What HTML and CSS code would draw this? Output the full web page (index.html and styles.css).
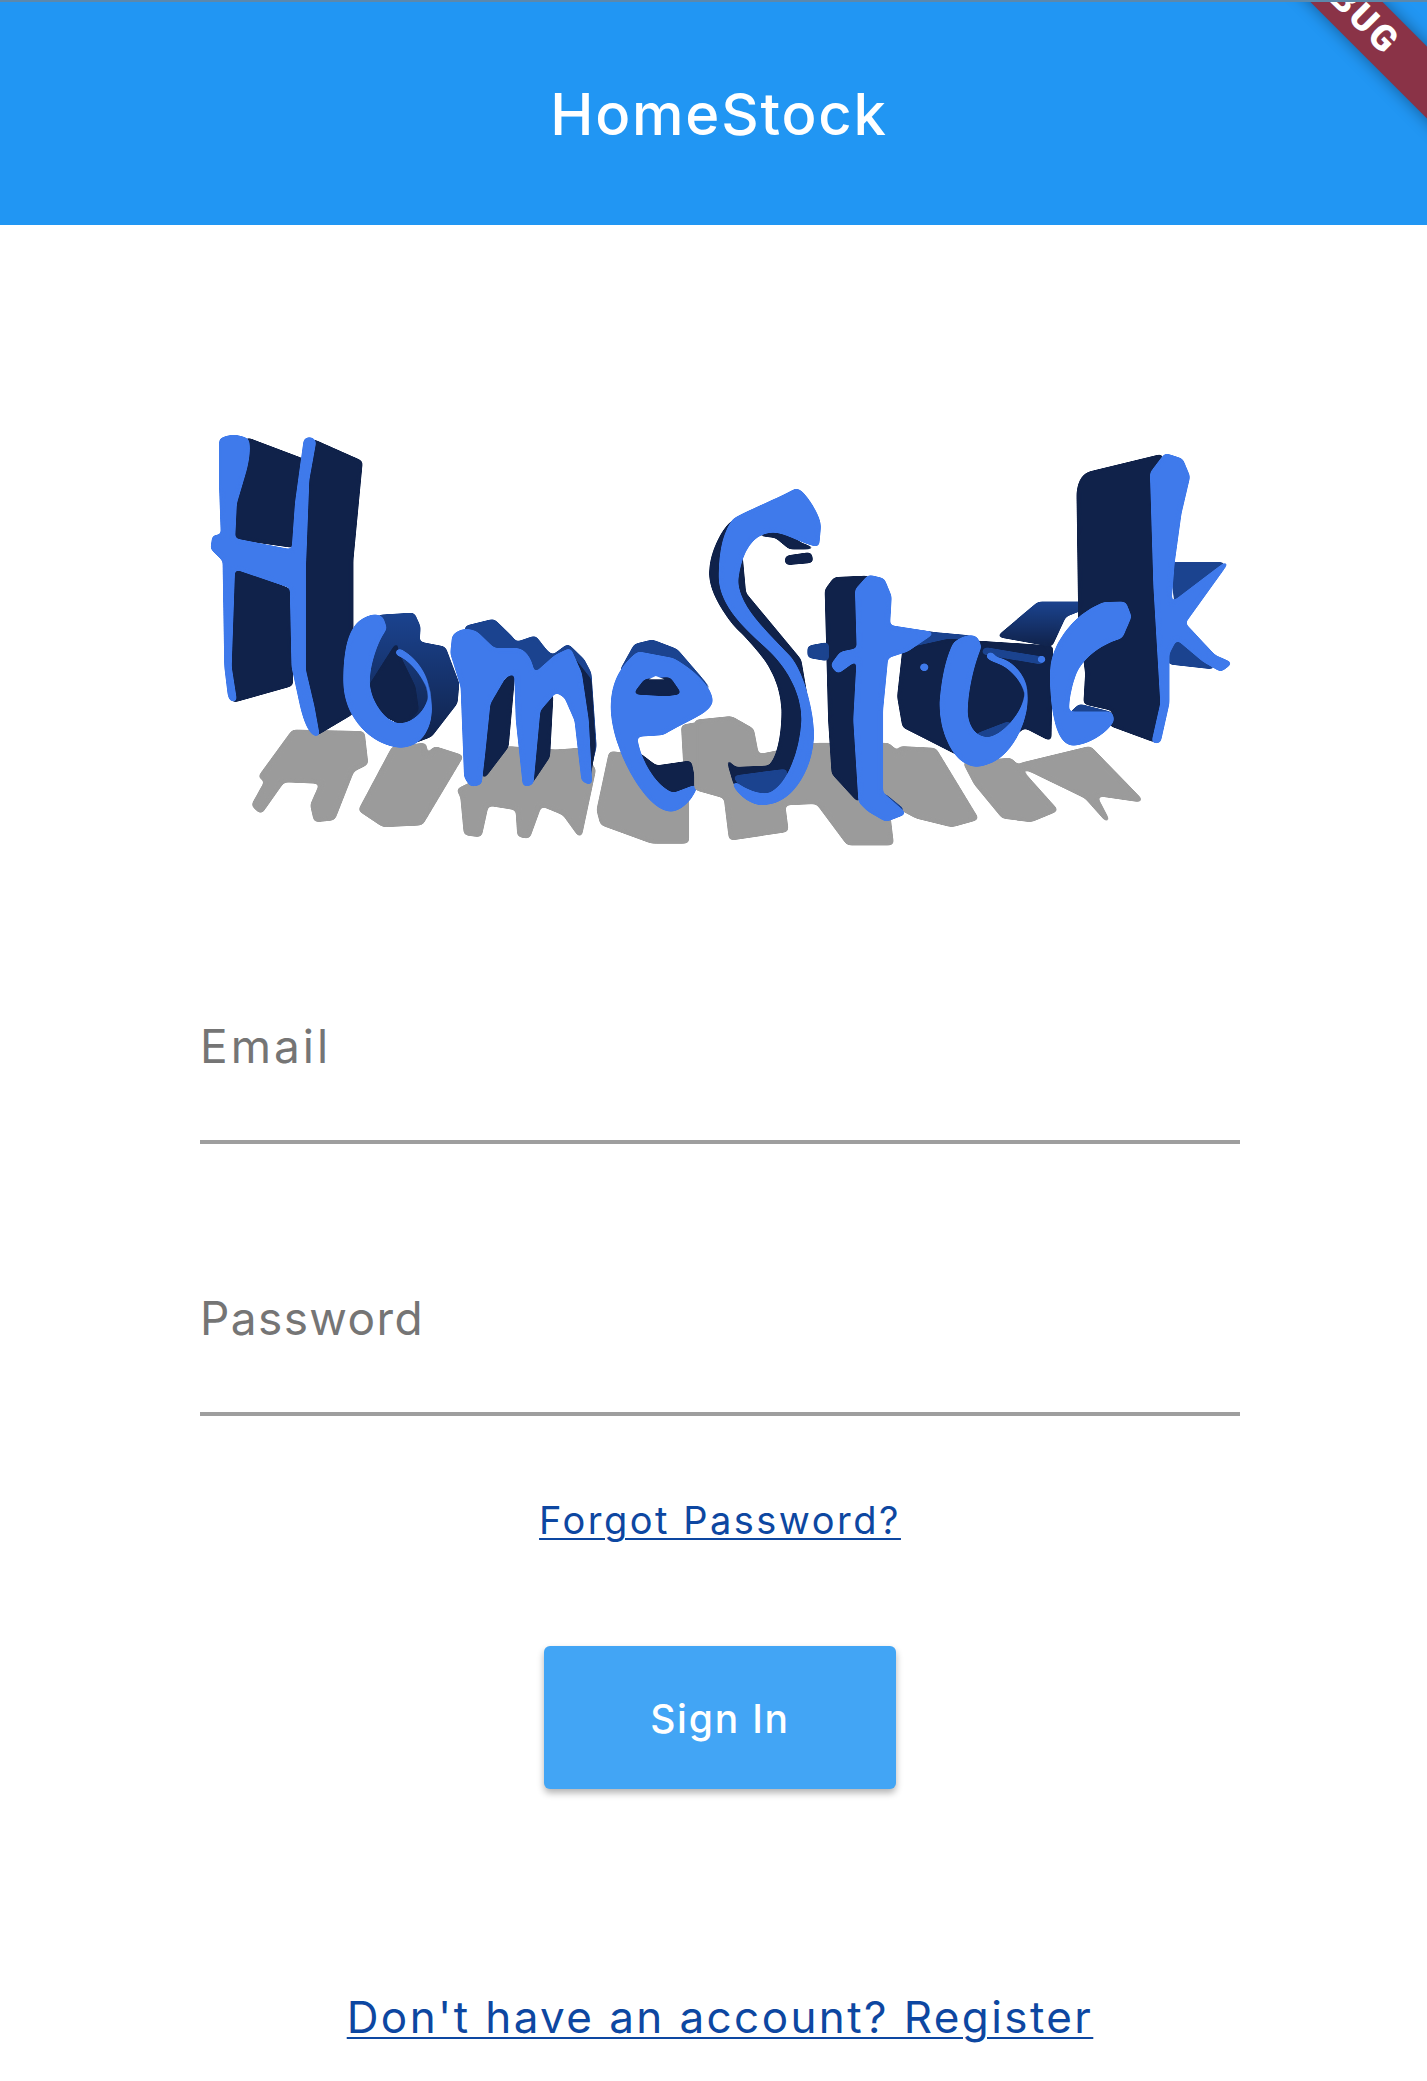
FILE: index.html
```html
<!DOCTYPE html>
<html lang="en">
<head>
<meta charset="utf-8">
<title>HomeStock</title>
<link rel="stylesheet" href="styles.css">
</head>
<body>
<header class="app-bar">
  <h1 class="app-title">HomeStock</h1>
  <div class="debug-banner">DEBUG</div>
</header>
<main class="login">
  <svg class="logo" viewBox="200 420 1040 440" role="img" aria-label="HomeStock logo">
    <defs>
      <linearGradient id="topShade" x1="0" y1="0" x2="0" y2="1">
        <stop offset="0" stop-color="#1b438f"/>
        <stop offset="1" stop-color="#10224a"/>
      </linearGradient>
      <filter id="smooth" x="-15%" y="-15%" width="130%" height="130%" color-interpolation-filters="sRGB">
        <feGaussianBlur stdDeviation="7"/>
        <feComponentTransfer>
          <feFuncA type="linear" slope="9" intercept="-3.6"/>
        </feComponentTransfer>
      </filter>
    </defs>
    <g transform="translate(190 420) scale(.345 .3333)">
      <g class="shadow">
        <path d="M300 935 L500 940 L510 1030 L470 1050 L415 1195 L365 1200 L355 1155 L385 1085 L270 1080 L205 1175 L185 1155 L225 1080 L205 1070 Z"/>
        <path d="M590 985 L680 975 L680 1025 L710 985 L785 1010 L670 1210 L560 1215 L495 1170 Z"/>
        <path d="M780 1110 L850 1075 L920 985 L1060 995 L1130 990 L1170 1050 L1130 1245 L1085 1180 L1015 1150 L980 1250 L955 1245 L950 1165 L860 1150 L840 1245 L800 1240 L790 1130 Z"/>
        <path d="M1220 1000 L1300 1010 L1440 1100 L1440 1265 L1340 1265 L1195 1210 L1185 1170 Z"/>
        <path d="M1430 920 L1568 895 L1568 1110 L1440 1100 Z"/>
      </g>
      <g class="dark">
        <path d="M165 55 L330 120 L300 380 L130 355 L135 200 Z"/>
        <path d="M130 440 L290 510 L295 795 L125 845 L110 740 Z"/>
        <path d="M355 60 L497 125 L470 420 L470 880 L365 945 L335 820 L325 500 Z"/>
      </g>
      <path class="mid" d="M125 360 L305 395 L300 450 L170 410 Z"/>
      <path class="shade" d="M545 585 L650 578 L668 620 L665 665 L740 680 L780 790 L775 850 L700 950 L650 970 L500 800 Z"/>
      <path class="dark" d="M600 670 L520 800 L550 880 L620 915 L660 870 L650 800 L600 695 Z"/>
      <path class="mid" d="M800 620 L880 600 L930 650 L945 670 L1000 650 L1030 690 L1050 710 L1095 675 L1140 720 L1160 760 L1175 980 L1150 1090 L1130 900 L1090 820 L1000 760 L900 720 L800 680 Z"/>
      <g class="dark">
        <path d="M940 750 L860 850 L850 1075 L920 980 Z"/>
        <path d="M1050 820 L1005 880 L985 1095 L1040 1010 Z"/>
        <path d="M1100 700 L1160 780 L1172 980 L1155 1090 L1125 880 Z"/>
      </g>
      <path class="mid" d="M1250 750 L1290 675 L1340 662 L1410 690 L1460 750 L1510 810 L1400 720 L1260 760 Z"/>
      <path class="dark" d="M1290 950 L1300 1000 L1350 1040 L1450 1025 L1465 1100 L1380 1130 L1320 1100 Z"/>
      <g class="face">
        <path d="M90 60 Q125 40 165 60 Q175 100 150 180 L130 250 L125 360 L300 395 L310 250 L335 60 Q350 50 360 65 L340 180 L330 450 L330 750 L355 860 L370 945 Q345 945 325 860 L300 740 L295 500 L125 440 L115 740 L130 840 Q120 845 115 825 L105 740 L100 420 L65 385 L70 350 L95 350 L90 200 Z"/>
        <path d="M490 610 C520 585 545 585 555 595 L565 625 C540 660 515 730 515 790 C520 850 560 905 600 915 C640 920 690 880 695 830 C690 780 650 720 600 700 L605 690 C660 720 695 780 695 850 C700 920 670 975 610 978 C540 975 450 900 450 780 C450 700 460 640 490 610 Z"/>
        <path d="M765 650 Q790 620 830 640 L880 690 L950 690 Q985 700 995 770 L1060 710 L1100 690 L1130 760 L1150 900 L1160 1090 L1140 1080 L1120 900 L1090 830 L1060 810 L1010 870 L990 1090 L970 1095 L950 900 L945 750 L910 770 L865 850 L850 1000 L840 1090 L815 1095 L800 1070 L790 800 L760 700 Z"/>
        <path d="M1225 860 C1225 790 1250 740 1300 700 L1400 720 C1450 750 1510 800 1510 845 C1500 880 1440 895 1370 940 L1290 945 C1295 1010 1340 1100 1400 1125 L1465 1100 C1450 1140 1420 1170 1390 1170 C1320 1160 1225 980 1225 860 Z"/>
      </g>
      <path class="dark" d="M1290 820 L1320 780 L1390 775 L1420 820 L1380 825 Z"/>
      <path class="hole" d="M1330 778 L1350 768 L1375 778 Z"/>
    </g>
    <g transform="translate(700 420) scale(.345 .3333)">
      <g class="shadow">
        <path d="M-10 905 L90 895 L150 930 L165 1010 L335 975 L545 975 L600 1030 L580 985 L680 990 L800 1195 L730 1215 L630 1190 L540 1140 L555 1270 L430 1270 L340 1145 L240 1150 L250 1230 L90 1255 L75 1130 L-10 1105 Z"/>
        <path d="M770 1030 L900 1020 L1030 1170 L960 1200 L880 1190 L800 1090 Z"/>
        <path d="M930 1035 L1130 985 L1275 1140 L1140 1120 L1180 1200 L1120 1130 Z"/>
      </g>
      <path class="dark" d="M110 295 C70 310 30 400 30 460 C30 530 100 620 125 640 C180 700 235 760 240 870 C240 950 225 1020 200 1040 L100 1045 L80 1020 L100 1090 L130 1130 L240 1130 L300 1000 L320 900 L290 720 L130 520 Z"/>
      <path class="mid" d="M100 1070 L250 1050 L240 1120 L140 1130 Z"/>
      <path class="dark" d="M170 345 L240 330 L290 370 L330 385 L260 385 L220 350 Z"/>
      <path class="dark" d="M250 410 L320 400 L325 425 L250 432 Z"/>
      <path class="face" d="M100 300 C150 270 230 240 280 210 C300 215 345 290 345 320 L340 375 C300 370 250 330 210 332 C150 335 115 390 105 480 C105 560 190 640 260 715 C300 770 325 880 325 950 C320 1040 270 1150 180 1150 C150 1150 110 1120 100 1090 C130 1115 170 1130 200 1125 C260 1100 295 990 300 900 C300 800 240 720 190 675 C130 620 60 550 60 470 C60 400 70 340 100 300 Z"/>
      <path class="dark" d="M365 510 L390 475 L490 470 L460 520 L460 1145 L385 1060 L375 900 Z"/>
      <g class="mid">
        <path d="M315 680 L370 670 L370 720 L315 710 Z"/>
        <path d="M530 1120 L590 1170 L540 1180 Z"/>
        <path d="M545 620 L680 640 L790 650 L720 680 L560 680 Z"/>
      </g>
      <path class="dark" d="M590 690 L720 660 L1020 680 L1015 960 L940 920 L870 980 L780 1020 L590 920 L575 830 Z"/>
      <path class="shade" d="M860 650 L980 545 L1170 545 L1060 590 L1020 680 Z"/>
      <path class="dark" d="M1095 220 Q1100 160 1140 155 L1340 105 L1310 180 L1320 500 L1340 900 L1320 965 L1190 915 L1200 870 L1115 850 L1120 760 L1100 600 Z"/>
      <path class="mid" d="M1365 430 L1520 430 L1380 560 Z"/>
      <path class="mid" d="M1360 670 L1400 660 L1490 745 L1360 730 Z"/>
      <path class="mid" d="M825 685 L1000 715 L990 730 L820 700 Z"/>
      <path class="mid" d="M800 945 L900 905 L880 945 L840 965 Z"/>
      <path class="mid" d="M1075 880 L1100 855 L1195 880 L1165 905 L1070 915 Z"/>
      <g class="face">
        <path d="M455 510 L490 470 L530 480 L550 530 L545 620 L670 640 L600 690 L540 710 L525 870 L525 1120 L590 1180 L540 1200 L490 1170 L465 1145 L450 900 L460 710 L400 755 L385 735 L410 700 L460 690 Z"/>
        <path d="M740 670 C760 655 785 645 800 655 L810 680 C790 730 770 810 770 880 C775 930 800 955 835 958 C880 950 945 880 945 820 C935 770 890 730 850 720 L855 715 C910 725 950 780 945 840 C940 920 890 1030 800 1035 C740 1030 700 940 700 850 C705 780 720 710 740 670 Z"/>
        <path d="M1310 160 L1350 105 L1395 120 L1415 170 L1390 280 L1370 430 L1360 560 L1525 430 L1400 610 L1490 710 L1535 730 L1510 750 L1460 720 L1380 650 L1355 700 L1355 850 L1330 965 L1315 965 L1340 850 L1320 500 Z"/>
        <path d="M1020 760 C1020 680 1080 590 1170 552 L1230 550 L1245 590 L1220 650 C1170 665 1110 700 1085 760 C1070 800 1062 850 1065 880 L1190 880 L1195 900 C1180 930 1130 970 1080 972 C1040 970 1020 880 1020 760 Z"/>
        <circle cx="650" cy="742" r="8"/>
        <circle cx="842" cy="708" r="7"/>
        <circle cx="990" cy="718" r="7"/>
      </g>
    </g>
  </svg>
  <form class="login-form">
    <input class="field field-email" type="email" placeholder="Email">
    <input class="field field-password" type="password" placeholder="Password">
    <a class="link link-forgot" href="#">Forgot Password?</a>
    <button class="sign-in" type="button">Sign In</button>
    <a class="link link-register" href="#">Don't have an account? Register</a>
  </form>
</main>
</body>
</html>
```

FILE: styles.css
```css
* { box-sizing: border-box; }
html, body { margin: 0; background: #fff; }
body { width: 1427px; height: 2081px; overflow: hidden; font-family: Inter, "Liberation Sans", sans-serif; }

.app-bar {
  position: relative;
  height: 225px;
  overflow: hidden;
  background: #2196f3;
  display: flex;
  justify-content: center;
  padding: 79px 0 0 11px;
}
.app-bar::after {
  content: "";
  position: absolute;
  inset: 0 0 auto 0;
  height: 2px;
  background: #5c88ab;
}
.app-title {
  margin: 0;
  color: #fff;
  font-size: 58px;
  font-weight: 500;
  line-height: 70px;
  letter-spacing: 1.8px;
}
.debug-banner {
  position: absolute;
  top: -28px;
  left: 1142px;
  width: 400px;
  height: 51px;
  padding-left: 15px;
  transform: rotate(45deg);
  background: #8a3347;
  box-shadow: 0 0 16px rgba(0, 0, 0, .4);
  color: #fff;
  font-family: Roboto, sans-serif;
  font-size: 36px;
  font-weight: 900;
  line-height: 51px;
  text-align: center;
  letter-spacing: 3px;
}

.login { padding: 195px 187px 0 200px; }
.logo { display: block; width: 1040px; height: 440px; }
.shadow, .dark, .mid, .shade, .face { filter: url(#smooth); stroke-linejoin: round; }
.shadow { fill: #9b9b9b; stroke: #9b9b9b; stroke-width: 12; }
.dark { fill: #10224a; stroke: #10224a; stroke-width: 6; }
.mid { fill: #1b438f; stroke: #1b438f; stroke-width: 6; }
.shade { fill: url(#topShade); }
.face { fill: #3f7aeb; stroke: #3f7aeb; stroke-width: 10; }
.hole { fill: #fff; }

.login-form { display: flex; flex-direction: column; align-items: center; }
.field {
  display: block;
  width: 100%;
  height: 180px;
  border: 0;
  border-bottom: 4px solid #9e9e9e;
  outline: 0;
  padding: 0 0 12px 0;
  background: none;
  font: 400 46px/54px Inter, sans-serif;
}
.field::placeholder { color: #757575; opacity: 1; }
.field-email { margin-top: 104px; letter-spacing: 3px; }
.field-password { margin-top: 92px; letter-spacing: 1.4px; }

.link { color: #0d47a1; font-weight: 400; text-decoration: underline; text-decoration-thickness: 2px; text-underline-offset: 4px; }
.link-forgot { margin-top: 81px; font-size: 38px; line-height: 46px; letter-spacing: 2.5px; }
.sign-in {
  margin-top: 103px;
  width: 352px;
  height: 143px;
  border: 0;
  border-radius: 6px;
  padding-top: 3px;
  background: #42a5f5;
  color: #fff;
  font: 500 39px/46px Inter, sans-serif;
  letter-spacing: 1.8px;
  box-shadow: 0 4px 7px rgba(0, 0, 0, .3);
}
.link-register { margin-top: 202px; font-size: 44px; line-height: 52px; letter-spacing: 2.4px; }
```
